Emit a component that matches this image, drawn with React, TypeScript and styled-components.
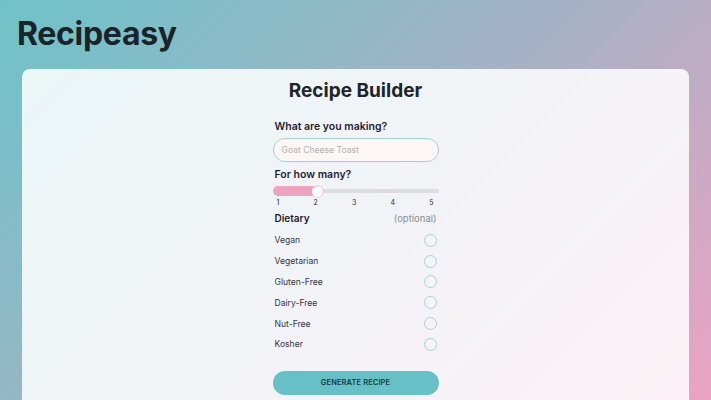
import React from 'react';
import styled, { createGlobalStyle } from 'styled-components';

const GlobalStyle = createGlobalStyle`
  html, body {
    margin: 0;
    padding: 0;
    height: 100%;
  }
  body {
    font-family: Inter, "Noto Sans", sans-serif;
    background: linear-gradient(135deg, #6ec3c8 0%, #a3b2c6 50%, #eba3c3 100%);
    background-attachment: fixed;
    overflow: hidden;
    color: #1c2328;
  }
`;

const Page = styled.div`
  height: 400px;
  padding: 0 22px;
  display: flex;
  flex-direction: column;
`;

const Brand = styled.h1`
  margin: 14px 0 0 -5px;
  font-size: 32px;
  font-weight: 700;
  letter-spacing: -0.3px;
  line-height: 40px;
  color: #1a2428;
`;

const Card = styled.main`
  margin-top: 15px;
  flex: 1;
  background: rgba(255, 255, 255, 0.85);
  border-radius: 8px 8px 0 0;
  display: flex;
  flex-direction: column;
  align-items: center;
  padding-top: 9px;
`;

const Title = styled.h2`
  margin: 0;
  font-size: 19px;
  font-weight: 700;
  line-height: 26px;
  color: #1c252a;
`;

const Form = styled.form`
  width: 166px;
  margin-top: 16px;
  display: flex;
  flex-direction: column;
`;

const Label = styled.label`
  font-size: 10.5px;
  font-weight: 600;
  color: #1f1d33;
  padding-left: 2px;
  line-height: 14px;
`;

const TextInput = styled.input`
  margin-top: 4px;
  height: 24px;
  box-sizing: border-box;
  border: 1px solid #9fd0d2;
  border-radius: 12px;
  background: #fcf7f4;
  padding: 0 8px;
  font-family: Inter, sans-serif;
  font-size: 8.6px;
  color: #333;
  outline: none;
  &::placeholder {
    color: #b3b0b4;
  }
`;

const SliderLabel = styled(Label)`
  margin-top: 6px;
`;

const SliderWrap = styled.div`
  position: relative;
  height: 10px;
  margin-top: 4px;
  display: flex;
  align-items: center;
`;

const Track = styled.div`
  flex: 1;
  height: 4px;
  background: #dcdce2;
  border-radius: 2px;
`;

const Fill = styled.div`
  position: absolute;
  left: 0;
  top: 0;
  height: 10px;
  background: #eea3bf;
  border-radius: 5px;
`;

const Thumb = styled.div`
  position: absolute;
  top: -0.5px;
  width: 11px;
  height: 11px;
  margin-left: -5.5px;
  border-radius: 50%;
  background: #fff;
  box-shadow: 0 0 0 0.5px #eea3bf;
`;

const Ticks = styled.div`
  display: flex;
  justify-content: space-between;
  padding: 0 5px 0 4px;
  margin-top: 2px;
  font-size: 7px;
  color: #2c2c3a;
  line-height: 9px;
`;

const DietHeader = styled.div`
  display: flex;
  justify-content: space-between;
  align-items: baseline;
  margin-top: 5px;
  padding: 0 2px;
`;

const DietTitle = styled.span`
  font-size: 10px;
  font-weight: 600;
  color: #1f1d33;
`;

const Optional = styled.span`
  font-size: 9.5px;
  color: #8a8a94;
`;

const Options = styled.div`
  display: flex;
  flex-direction: column;
  margin-top: 6px;
`;

const Option = styled.label`
  display: flex;
  justify-content: space-between;
  align-items: center;
  height: 20.8px;
  padding: 0 2px;
  font-size: 8.6px;
  color: #35333f;
`;

const Radio = styled.span`
  width: 11px;
  height: 11px;
  border-radius: 50%;
  border: 1px solid #a6d2d5;
`;

const Button = styled.button`
  margin-top: 16px;
  height: 24px;
  border: none;
  border-radius: 12px;
  background: #67c0c5;
  font-family: Inter, sans-serif;
  font-size: 7.5px;
  font-weight: 600;
  color: #1c3740;
  letter-spacing: 0.1px;
`;

const diets = ['Vegan', 'Vegetarian', 'Gluten-Free', 'Dairy-Free', 'Nut-Free', 'Kosher'];

export default function App() {
  const servings = 2;
  const center = 6 + ((servings - 1) / 4) * 154;
  return (
    <>
      <GlobalStyle />
      <Page>
        <Brand>Recipeasy</Brand>
        <Card>
          <Title>Recipe Builder</Title>
          <Form onSubmit={e => e.preventDefault()}>
            <Label>What are you making?</Label>
            <TextInput placeholder="Goat Cheese Toast" />
            <SliderLabel>For how many?</SliderLabel>
            <SliderWrap>
              <Track />
              <Fill style={{ width: center + 5 }} />
              <Thumb style={{ left: center }} />
            </SliderWrap>
            <Ticks>
              {[1, 2, 3, 4, 5].map(n => <span key={n}>{n}</span>)}
            </Ticks>
            <DietHeader>
              <DietTitle>Dietary</DietTitle>
              <Optional>(optional)</Optional>
            </DietHeader>
            <Options>
              {diets.map(d => (
                <Option key={d}>
                  {d}
                  <Radio />
                </Option>
              ))}
            </Options>
            <Button type="submit">GENERATE RECIPE</Button>
          </Form>
        </Card>
      </Page>
    </>
  );
}
